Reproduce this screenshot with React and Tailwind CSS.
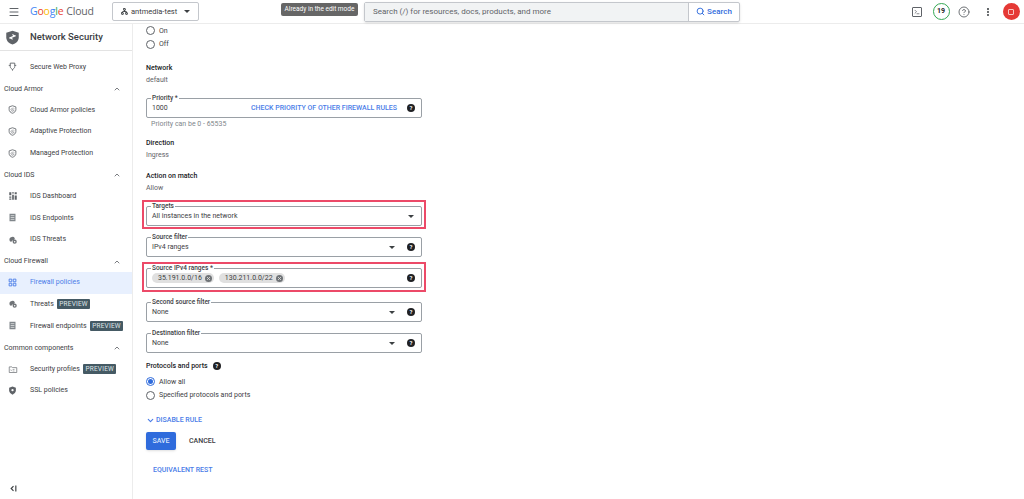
import { ChevronUp, ChevronDown, Menu, Search, Terminal, EllipsisVertical, CircleHelp, Network, X } from "lucide-react";

function HelpDot({ className = "" }) {
  return (
    <span className={`flex h-[8px] w-[8px] shrink-0 items-center justify-center rounded-full bg-[#202124] text-[6px] font-bold leading-none text-white ${className}`}>?</span>
  );
}

function Caret() {
  return <span className="h-0 w-0 border-x-[3px] border-t-[3px] border-x-transparent border-t-[#3c4043]" />;
}

function Preview() {
  return <span className="block rounded-[1px] bg-[#455a64] px-[2px] py-[1px] text-[6.5px] leading-[8px] tracking-[0.2px] text-[#dfe5e8]">PREVIEW</span>;
}

function ArmorIcon() {
  return (
    <svg viewBox="0 0 24 24" className="h-[9px] w-[9px]" fill="none" stroke="#5f6368" strokeWidth="2.2">
      <path d="M12 2l9 3v7c0 5-4 8.500-9 10-5-1.500-9-5-9-10V5z" />
      <path d="M7 13l6-6M8 17l8-8M12 18l5-5" strokeWidth="1.8" />
    </svg>
  );
}

function ProxyIcon() {
  return (
    <svg viewBox="0 0 24 24" className="h-[9px] w-[9px]" fill="none" stroke="#5f6368" strokeWidth="2.4">
      <path d="M6 3h12v9c0 4-3 6-6 8-3-2-6-4-6-8z" />
      <path d="M2 9h4M18 9h4M12 20v3" />
    </svg>
  );
}

function DashIcon() {
  return (
    <svg viewBox="0 0 24 24" className="h-[10px] w-[10px]" fill="#5f6368">
      <path d="M3 3h5v7H3zM3 13h5v3H3zM3 18h5v3H3zM10 3h4v3h-4zM10 9h4v12h-4zM16 3h5v5h-5zM16 11h5v10h-5z" />
    </svg>
  );
}

function EndpointIcon() {
  return (
    <svg viewBox="0 0 24 24" className="h-[9px] w-[9px]" fill="#80868b">
      <path d="M4 2h16v20H4z" />
      <path d="M7 7h10M7 12h10M7 17h10" stroke="#fff" strokeWidth="1.600" />
    </svg>
  );
}

function ThreatIcon() {
  return (
    <svg viewBox="0 0 24 24" className="h-[10px] w-[10px]" fill="#6f7377">
      <path d="M4 14a7 7 0 0 1 5-9 6 6 0 0 1 7 2c1 3-1 5-4 5-1 2-3 4-5 4-2 0-3-1-3-2z" />
      <circle cx="16" cy="16" r="5" />
      <circle cx="16" cy="16" r="1.800" fill="#fff" />
    </svg>
  );
}

function FirewallIcon() {
  return (
    <svg viewBox="0 0 24 24" className="h-[9px] w-[9px]" fill="none" stroke="#4a7de8" strokeWidth="2.4">
      <path d="M3 3h7v7H3zM14 3h7v7h-7zM3 14h7v7H3zM14 14h7v7h-7z" />
    </svg>
  );
}

function ProfilesIcon() {
  return (
    <svg viewBox="0 0 24 24" className="h-[9px] w-[10px]" fill="none" stroke="#6f7377" strokeWidth="2">
      <path d="M2 5h7l2 2h11v13H2z" />
      <path d="M6 12l2 4M11 12h5M11 16h5" strokeWidth="1.500" />
    </svg>
  );
}

function SslIcon() {
  return (
    <svg viewBox="0 0 24 24" className="h-[9px] w-[9px]" fill="#5f6368">
      <path d="M12 1l9 3.500v7c0 5.500-4 9.500-9 11.500-5-2-9-6-9-11.500v-7z" />
      <circle cx="12" cy="11" r="3" fill="#fff" />
    </svg>
  );
}

function NavRow({ icon, label, tag, active }) {
  return (
    <div className={`flex h-[21.600px] items-center pl-[8px] ${active ? "bg-[#e8f0fe] text-[#4a7de8]" : "text-[#3c4043]"}`}>
      <span className="flex w-[22px] shrink-0 items-center">{icon}</span>
      <span className="whitespace-nowrap">{label}</span>
      {tag && <span className="ml-[3.500px]"><Preview /></span>}
    </div>
  );
}

function NavGroup({ label }) {
  return (
    <div className="flex h-[21.600px] items-center justify-between pl-[4px] pr-[11px] pt-[1px] text-[#3c4043]">
      <span>{label}</span>
      <ChevronUp className="h-[8px] w-[8px] text-[#5f6368]" strokeWidth={2.5} />
    </div>
  );
}

function Radio({ label, checked }) {
  return (
    <div className="flex h-[13.500px] items-center gap-[4px] text-[#3c4043]">
      <span className={`flex h-[9px] w-[9px] items-center justify-center rounded-full border ${checked ? "border-[#2f6bdc]" : "border-[#5f6368]"}`}>
        {checked && <span className="h-[5px] w-[5px] rounded-full bg-[#2f6bdc]" />}
      </span>
      {label}
    </div>
  );
}

function Field({ label, children, className = "" }) {
  return (
    <div className={`relative flex h-[20px] w-[276px] items-center rounded-[2px] border border-[#9aa0a6] pl-[5px] pr-[6px] text-[7px] text-[#3c4043] ${className}`}>
      <span className="absolute -top-[5px] left-[4px] bg-white px-[1px] text-[6.500px] font-medium leading-[8px] text-[#3c4043]">{label}</span>
      {children}
    </div>
  );
}

function SelectField({ label, value, help = true, className }) {
  return (
    <Field label={label} className={className}>
      <span className="flex-1">{value}</span>
      <Caret />
      {help ? <HelpDot className="ml-[12px]" /> : <span className="w-[1px]" />}
    </Field>
  );
}

function Chip({ text }) {
  return (
    <span className="flex h-[10px] items-center gap-[3px] rounded-full bg-[#e0e0e0] pl-[6px] pr-[2px] text-[#3c4043]">
      {text}
      <span className="flex h-[7px] w-[7px] items-center justify-center rounded-full bg-[#6f7377]">
        <X className="h-[5px] w-[5px] text-[#e0e0e0]" strokeWidth={4} />
      </span>
    </span>
  );
}

function ReadOnly({ title, value, className = "" }) {
  return (
    <div className={`leading-[12px] ${className}`}>
      <div className="font-medium text-[#202124]">{title}</div>
      <div className="text-[#5f6368]">{value}</div>
    </div>
  );
}

export default function App() {
  return (
    <div className="flex h-[499px] w-[1024px] flex-col overflow-hidden bg-white font-['Roboto',sans-serif] text-[7px]">
      {/* top bar */}
      <header className="flex h-[24px] shrink-0 items-center border-b border-[#ececec] pl-[8px]">
        <Menu className="h-[12px] w-[12px] text-[#5f6368]" />
        <div className="ml-[10px] flex w-[82px] whitespace-nowrap font-['Open_Sans',sans-serif] text-[10.500px] leading-none tracking-[-0.2px]">
          <span className="text-[#4285f4]">G</span>
          <span className="text-[#ea4335]">o</span>
          <span className="text-[#fbbc04]">o</span>
          <span className="text-[#4285f4]">g</span>
          <span className="text-[#34a853]">l</span>
          <span className="text-[#ea4335]">e</span>
          <span className="ml-[3px] text-[#5f6368]">Cloud</span>
        </div>
        <div className="flex h-[19px] w-[87px] items-center rounded-[2px] border border-[#c4c7cc] px-[8px] text-[7.500px] text-[#3c4043]">
          <Network className="mr-[3px] h-[7px] w-[7px] text-[#3c4043]" strokeWidth={3} />
          <span className="flex-1">antmedia-test</span>
          <Caret />
        </div>
        <div className="ml-[82px] flex h-[13px] w-[77px] -translate-y-[2px] items-center justify-center rounded-[2px] bg-[#666] text-[6.500px] text-white">Already in the edit mode</div>
        <div className="ml-[6px] flex h-[20px] w-[376px] items-center rounded-[2px] border border-[#c4c7cc] shadow-sm">
          <div className="flex h-full flex-1 items-center bg-[#f1f3f4] pl-[8px] text-[8px] text-[#5f6368]">Search (/) for resources, docs, products, and more</div>
          <div className="flex h-full w-[51px] items-center justify-center gap-[2px] border-l border-[#c4c7cc] text-[8px] font-medium text-[#2f6bdc]">
            <Search className="h-[9px] w-[9px]" strokeWidth={2.5} />
            Search
          </div>
        </div>
        <Terminal className="ml-[172px] h-[10px] w-[10px] rounded-[1px] border border-[#5f6368] p-[1px] text-[#5f6368]" strokeWidth={3} />
        <div className="ml-[10.500px] flex h-[17px] w-[17px] items-center justify-center rounded-full border border-[#34a853] text-[7px] font-bold text-[#202124]">19</div>
        <CircleHelp className="ml-[8px] h-[12px] w-[12px] text-[#5f6368]" strokeWidth={1.8} />
        <EllipsisVertical className="ml-[13px] h-[10px] w-[10px] text-[#3c4043]" strokeWidth={3} />
        <div className="ml-[10px] flex h-[17px] w-[17px] items-center justify-center rounded-full bg-[#e53935]">
          <span className="h-[6px] w-[6px] rounded-[1px] border border-white/70" />
        </div>
      </header>

      <div className="flex min-h-0 flex-1">
        {/* sidebar */}
        <aside className="flex w-[133px] shrink-0 flex-col border-r border-[#ececec]">
          <div className="flex h-[27px] shrink-0 items-center border-b border-[#e3e3e3] pl-[5px] text-[9.500px] font-medium text-[#3c4043]">
            <svg viewBox="0 0 24 24" className="mr-[10px] h-[15px] w-[15px]" fill="#5f6368">
              <path d="M12 1l10 3.500v7c0 6-4.500 10-10 11.500C6.500 21.500 2 17.500 2 11.500v-7z" />
              <path d="M7 13l10-4M12 7l3 3M12 15l-3-3" stroke="#fff" strokeWidth="1.800" fill="none" />
            </svg>
            Network Security
          </div>
          <div className="flex-1 pt-[5px]">
            <NavRow label="Secure Web Proxy" icon={<ProxyIcon />} />
            <NavGroup label="Cloud Armor" />
            <NavRow label="Cloud Armor policies" icon={<ArmorIcon />} />
            <NavRow label="Adaptive Protection" icon={<ArmorIcon />} />
            <NavRow label="Managed Protection" icon={<ArmorIcon />} />
            <NavGroup label="Cloud IDS" />
            <NavRow label="IDS Dashboard" icon={<DashIcon />} />
            <NavRow label="IDS Endpoints" icon={<EndpointIcon />} />
            <NavRow label="IDS Threats" icon={<ThreatIcon />} />
            <NavGroup label="Cloud Firewall" />
            <NavRow active label="Firewall policies" icon={<FirewallIcon />} />
            <NavRow label="Threats" tag icon={<ThreatIcon />} />
            <NavRow label="Firewall endpoints" tag icon={<EndpointIcon />} />
            <NavGroup label="Common components" />
            <NavRow label="Security profiles" tag icon={<ProfilesIcon />} />
            <NavRow label="SSL policies" icon={<SslIcon />} />
          </div>
          <div className="flex h-[22px] items-center pl-[10px]">
            <svg viewBox="0 0 12 12" className="h-[7px] w-[7px]" fill="none" stroke="#3c4043" strokeWidth="2">
              <path d="M6 2L2 6l4 4M10 1v10" />
            </svg>
          </div>
        </aside>

        {/* form */}
        <main className="flex-1 pl-[13px]">
          <Radio label="On" />
          <Radio label="Off" />
          <ReadOnly title="Network" value="default" className="mt-[11px]" />
          <Field label="Priority *" className="mt-[12px]">
            <span className="flex-1">1000</span>
            <span className="font-medium text-[#4a7de8]">CHECK PRIORITY OF OTHER FIREWALL RULES</span>
            <HelpDot className="ml-[10px]" />
          </Field>
          <div className="ml-[5px] mt-[1px] leading-[11px] text-[#80868b]">Priority can be 0 - 65535</div>
          <ReadOnly title="Direction" value="Ingress" className="mt-[7px]" />
          <ReadOnly title="Action on match" value="Allow" className="mt-[9px]" />

          <div className="-ml-[4px] mt-[6px] w-[284px] border-2 border-[#ec4a68] px-[2px] pb-[1px] pt-[4px]">
            <SelectField label="Targets" value="All instances in the network" help={false} />
          </div>
          <SelectField label="Source filter" value="IPv4 ranges" className="mt-[8px]" />
          <div className="-ml-[4px] mt-[5px] w-[284px] border-2 border-[#ec4a68] px-[2px] pb-[2px] pt-[4px]">
            <Field label="Source IPv4 ranges *">
              <div className="flex flex-1 gap-[5px]">
                <Chip text="35.191.0.0/16" />
                <Chip text="130.211.0.0/22" />
              </div>
              <HelpDot />
            </Field>
          </div>
          <SelectField label="Second source filter" value="None" className="mt-[10px]" />
          <SelectField label="Destination filter" value="None" className="mt-[11px]" />

          <div className="mt-[8px] flex h-[10px] items-center gap-[5px] font-medium text-[#202124]">
            Protocols and ports <HelpDot />
          </div>
          <div className="mt-[4px]">
            <Radio label="Allow all" checked />
            <Radio label="Specified protocols and ports" />
          </div>
          <div className="mt-[14px] flex h-[9px] items-center gap-[1px] font-medium text-[#4a7de8]">
            <ChevronDown className="h-[9px] w-[9px]" strokeWidth={3} />
            DISABLE RULE
          </div>
          <div className="mt-[7px] flex items-center gap-[13px] font-medium">
            <button className="h-[18px] w-[30px] rounded-[2px] bg-[#2f6bdc] text-[7px] font-medium text-[#d8e4fb] shadow">SAVE</button>
            <span className="text-[#3c4043]">CANCEL</span>
          </div>
          <div className="ml-[7px] mt-[16px] font-medium leading-[9px] text-[#4a7de8]">EQUIVALENT REST</div>
        </main>
      </div>
    </div>
  );
}
